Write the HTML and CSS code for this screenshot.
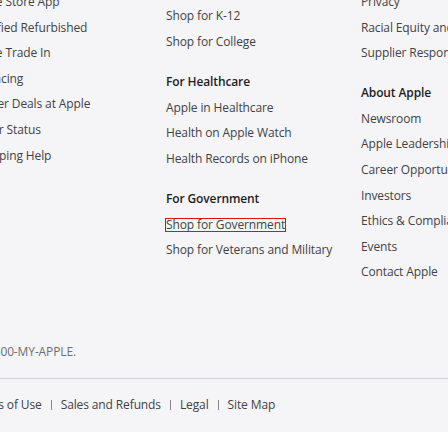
FILE: index.html
```html
<!DOCTYPE html>
<html lang="en">
<head>
<meta charset="utf-8">
<title>Apple footer</title>
<link rel="stylesheet" href="styles.css">
</head>
<body>
<footer class="footer">
  <nav class="directory">
    <div class="col">
      <div class="section">
        <h3 class="heading">Shop and Learn</h3>
        <ul class="links">
          <li><a href="#">Store</a></li>
          <li><a href="#">Mac</a></li>
          <li><a href="#">iPad</a></li>
          <li><a href="#">iPhone</a></li>
          <li><a href="#">Watch</a></li>
          <li><a href="#">AirPods</a></li>
          <li><a href="#">TV &amp; Home</a></li>
          <li><a href="#">AirTag</a></li>
          <li><a href="#">Accessories</a></li>
          <li><a href="#">Gift Cards</a></li>
        </ul>
      </div>
    </div>
    <div class="col">
      <div class="section">
        <h3 class="heading">Apple Wallet</h3>
        <ul class="links">
          <li><a href="#">Wallet</a></li>
          <li><a href="#">Apple Card</a></li>
          <li><a href="#">Apple Pay</a></li>
          <li><a href="#">Apple Cash</a></li>
        </ul>
      </div>
      <div class="section">
        <h3 class="heading">Account</h3>
        <ul class="links">
          <li><a href="#">Manage Your Apple ID</a></li>
          <li><a href="#">Apple Store Account</a></li>
          <li><a href="#">iCloud.com</a></li>
        </ul>
      </div>
    </div>
    <div class="col">
      <div class="section">
        <h3 class="heading">Apple Store</h3>
        <ul class="links">
          <li><a href="#">Find a Store</a></li>
          <li><a href="#">Genius Bar</a></li>
          <li><a href="#">Today at Apple</a></li>
          <li><a href="#">Apple Camp</a></li>
          <li><a href="#">Apple Store App</a></li>
          <li><a href="#">Certified Refurbished</a></li>
          <li><a href="#">Apple Trade In</a></li>
          <li><a href="#">Financing</a></li>
          <li><a href="#">Carrier Deals at Apple</a></li>
          <li><a href="#">Order Status</a></li>
          <li><a href="#">Shopping Help</a></li>
        </ul>
      </div>
    </div>
    <div class="col">
      <div class="section">
        <h3 class="heading">For Business</h3>
        <ul class="links">
          <li><a href="#">Apple and Business</a></li>
          <li><a href="#">Shop for Business</a></li>
        </ul>
      </div>
      <div class="section">
        <h3 class="heading">For Education</h3>
        <ul class="links">
          <li><a href="#">Apple and Education</a></li>
          <li><a href="#">Shop for K-12</a></li>
          <li><a href="#">Shop for College</a></li>
        </ul>
      </div>
      <div class="section">
        <h3 class="heading">For Healthcare</h3>
        <ul class="links">
          <li><a href="#">Apple in Healthcare</a></li>
          <li><a href="#">Health on Apple Watch</a></li>
          <li><a href="#">Health Records on iPhone</a></li>
        </ul>
      </div>
      <div class="section">
        <h3 class="heading">For Government</h3>
        <ul class="links">
          <li><a class="outlined" href="#">Shop for Government</a></li>
          <li><a href="#">Shop for Veterans and Military</a></li>
        </ul>
      </div>
    </div>
    <div class="col">
      <div class="section">
        <h3 class="heading">Apple Values</h3>
        <ul class="links">
          <li><a href="#">Accessibility</a></li>
          <li><a href="#">Education</a></li>
          <li><a href="#">Environment</a></li>
          <li><a href="#">Inclusion and Diversity</a></li>
          <li><a href="#">Privacy</a></li>
          <li><a href="#">Racial Equity and Justice</a></li>
          <li><a href="#">Supplier Responsibility</a></li>
        </ul>
      </div>
      <div class="section">
        <h3 class="heading">About Apple</h3>
        <ul class="links">
          <li><a href="#">Newsroom</a></li>
          <li><a href="#">Apple Leadership</a></li>
          <li><a href="#">Career Opportunities</a></li>
          <li><a href="#">Investors</a></li>
          <li><a href="#">Ethics &amp; Compliance</a></li>
          <li><a href="#">Events</a></li>
          <li><a href="#">Contact Apple</a></li>
        </ul>
      </div>
    </div>
  </nav>
  <p class="shop">More ways to shop: <a href="#">Find an Apple Store</a> or <a href="#">other retailer</a> near you. Or call 1-800-MY-APPLE.</p>
  <div class="legal">
    <span class="copyright">Copyright © 2024 Apple Inc. All rights reserved.</span>
    <ul class="legal-links">
      <li><a href="#">Privacy Policy</a></li>
      <li><a href="#">Terms of Use</a></li>
      <li><a href="#">Sales and Refunds</a></li>
      <li><a href="#">Legal</a></li>
      <li><a href="#">Site Map</a></li>
    </ul>
  </div>
</footer>
</body>
</html>
```

FILE: styles.css
```css
html, body {
  margin: 0;
  padding: 0;
  background: #ffffff;
  overflow: hidden;
}

body {
  font-family: "Open Sans", "Noto Sans", sans-serif;
  font-size: 12px;
  line-height: 16px;
  letter-spacing: -0.01em;
  color: #424245;
}

a {
  color: inherit;
  text-decoration: none;
}

.footer {
  width: 980px;
  margin-top: -134px;
  margin-left: -419px;
  padding-bottom: 19px;
  background: #f5f5f7;
}

.directory {
  display: grid;
  grid-template-columns: repeat(5, 195px);
  align-items: start;
}

.section + .section {
  margin-top: 24px;
}

.heading {
  margin: 0;
  font-size: 12px;
  line-height: 16px;
  font-weight: 600;
  color: #1d1d1f;
}

.links {
  list-style: none;
  margin: 0;
  padding: 0;
}

.links li {
  margin-top: 9.6px;
}

.outlined {
  display: inline-block;
  line-height: 12px;
  vertical-align: -1px;
  outline: 1px solid #e0100f;
}

.shop {
  margin: 63.6px 0 0;
  color: #6e6e73;
}

.shop a {
  color: #0066cc;
  text-decoration: underline;
}

.legal {
  display: flex;
  margin-top: 18px;
  padding-top: 18px;
  border-top: 1px solid #d2d2d7;
}

.copyright {
  margin-right: 39px;
  color: #6e6e73;
}

.legal-links {
  display: flex;
  list-style: none;
  margin: 0;
  padding: 0;
}

.legal-links li {
  display: flex;
  align-items: center;
}

.legal-links li:not(:last-child)::after {
  content: "";
  width: 1px;
  height: 10px;
  margin: 0 9px;
  background: #86868b;
}
```
